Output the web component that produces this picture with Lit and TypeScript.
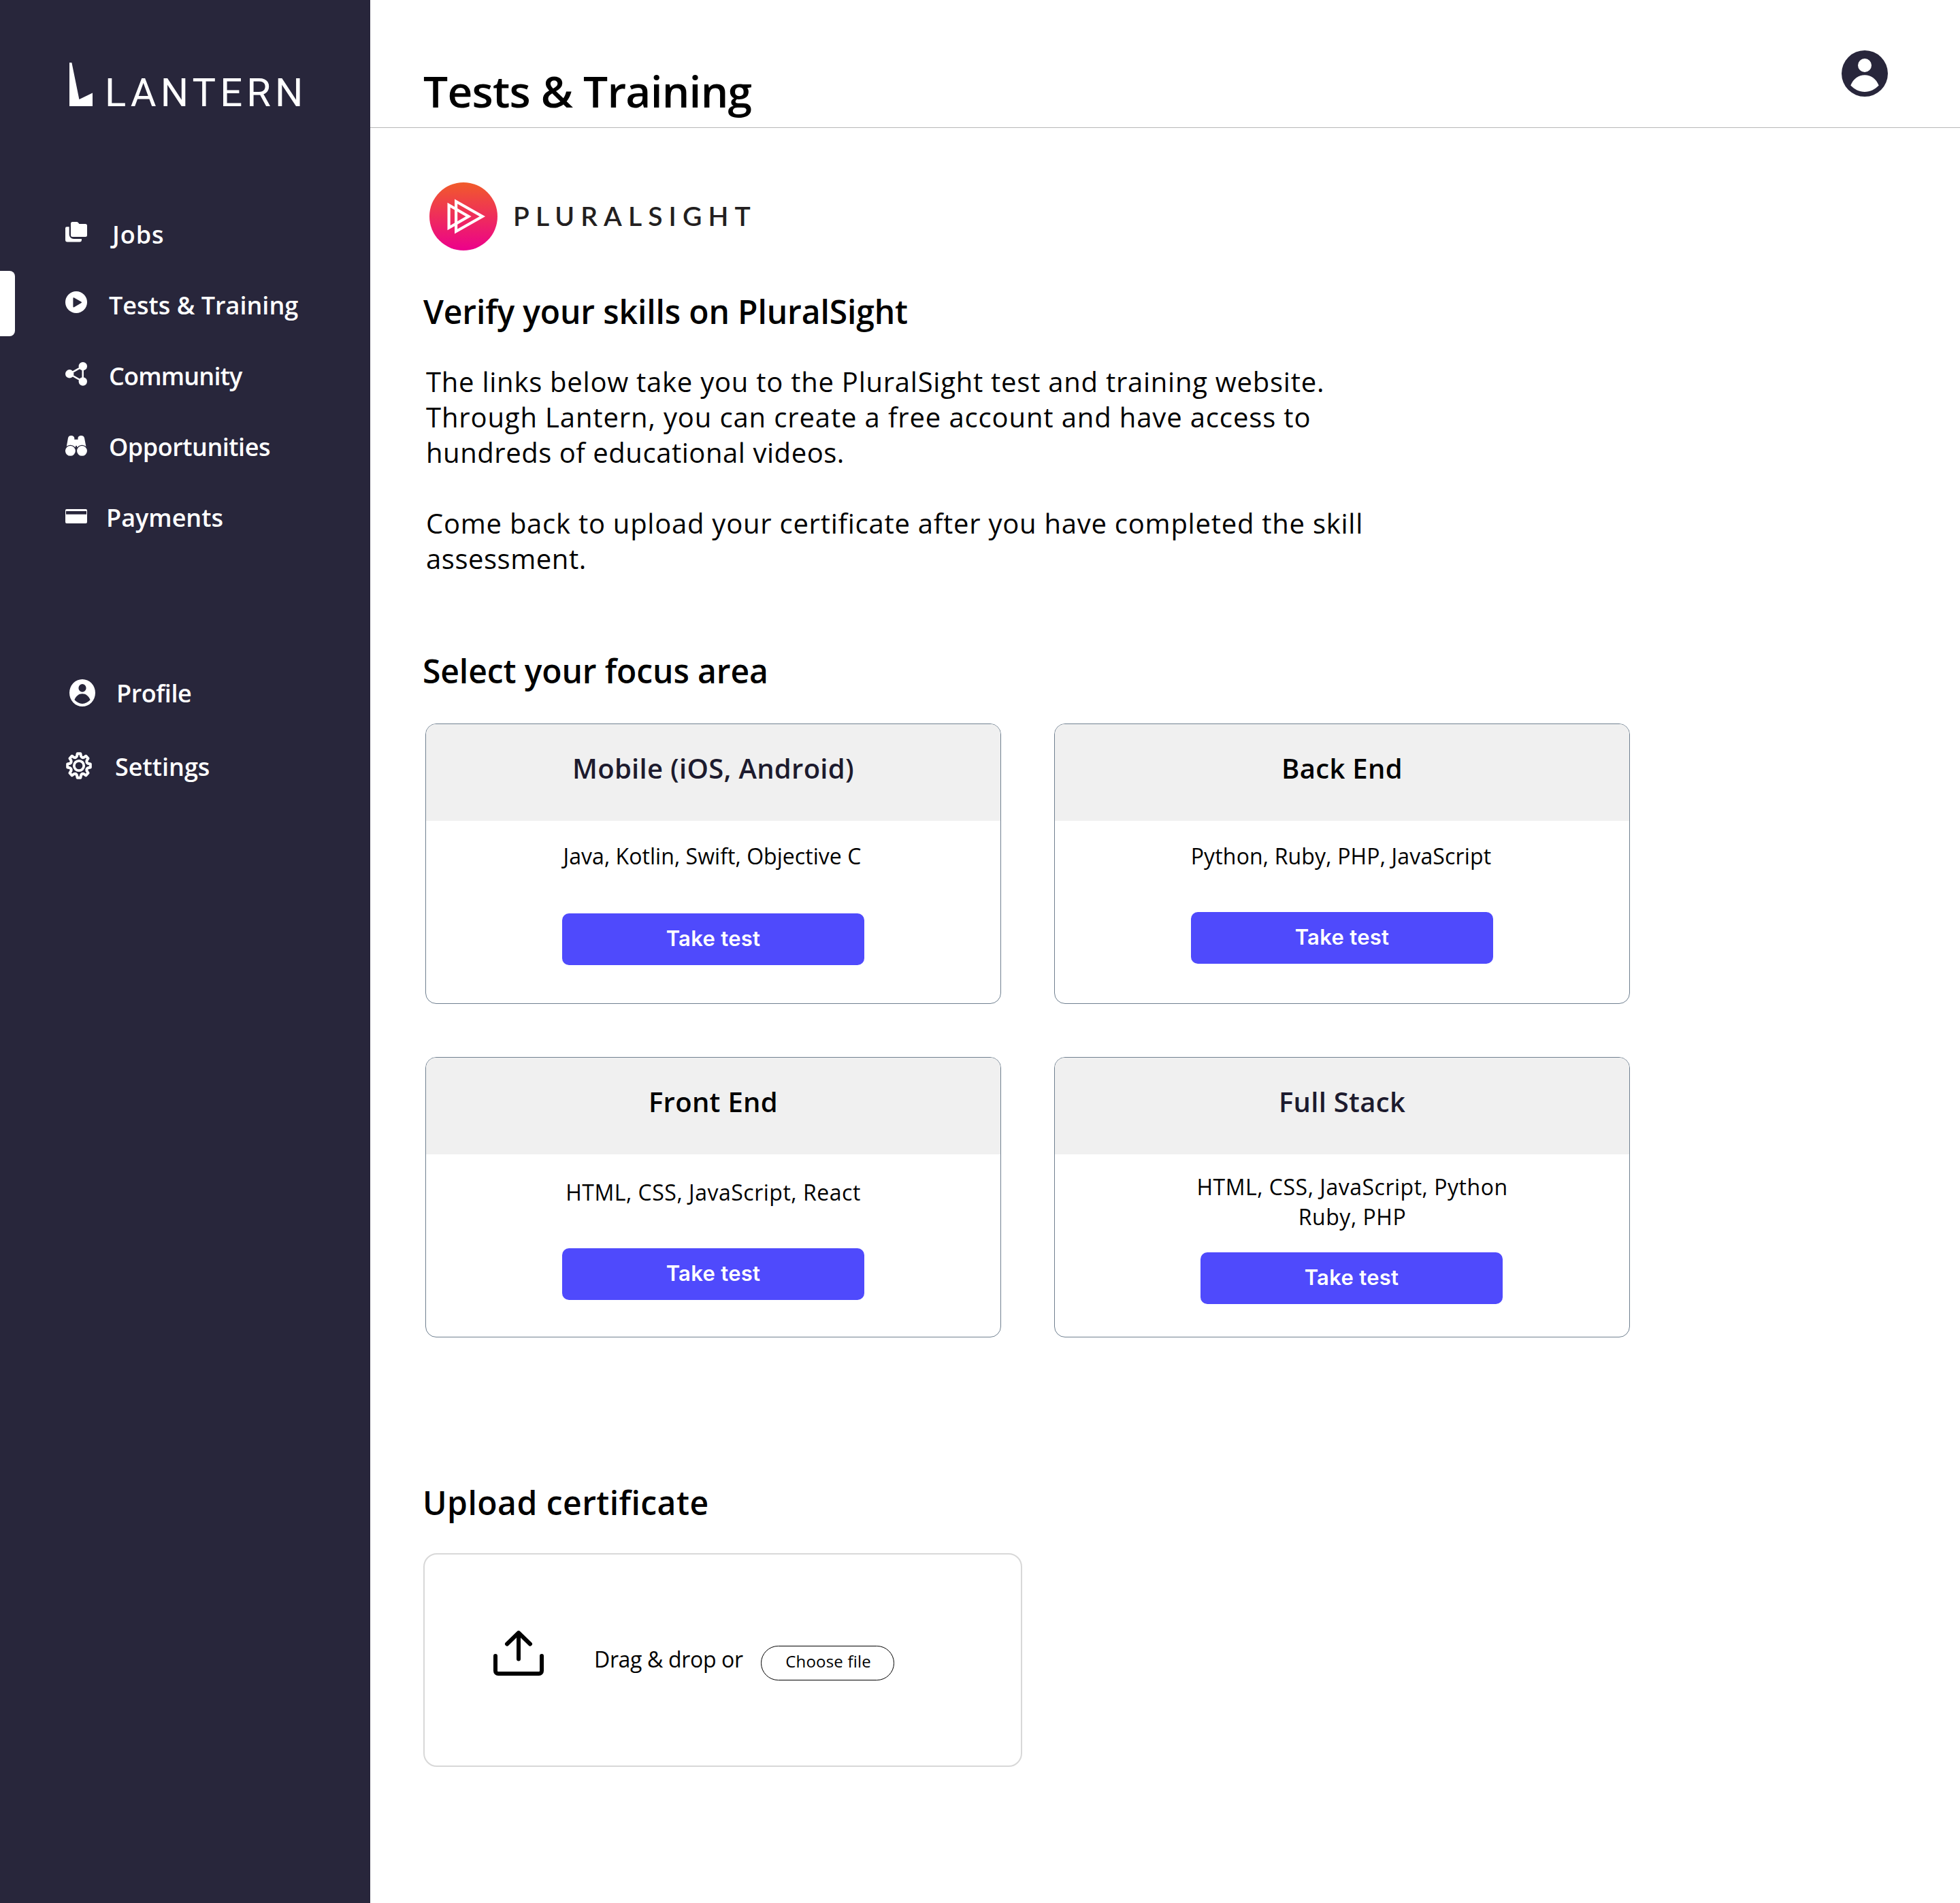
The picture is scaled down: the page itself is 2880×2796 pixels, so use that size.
import { LitElement, html, css, svg } from "lit";
import { customElement, property } from "lit/decorators.js";
import { classMap } from "lit/directives/class-map.js";

/* Eight-toothed cog outline, traced once around its centre. */
const gearPath = (() => {
  const cx = 19, cy = 20, pts: string[] = [];
  const at = (deg: number, r: number) => {
    const a = ((deg - 90) * Math.PI) / 180;
    return `${(cx + r * Math.cos(a)).toFixed(2)} ${(cy + r * 1.05 * Math.sin(a)).toFixed(2)}`;
  };
  for (let i = 0; i < 8; i++) {
    const d = i * 45;
    pts.push(`${i ? "L" : "M"}${at(d - 8, 17)} L${at(d + 8, 17)} L${at(d + 13, 13.6)} Q${at(d + 22.5, 11.6)} ${at(d + 32, 13.6)}`);
  }
  return pts.join(" ") + "Z";
})();

const userShape = svg`<path fill-rule="evenodd" d="M34 0a34 34 0 1 1 0 68a34 34 0 1 1 0-68zM34 12a10 10 0 1 0 0 20a10 10 0 1 0 0-20zM13.3 51.6C19 57.5 26 61 34 61S49 57.5 54.7 51.6C51 42 43 36.3 34 36.3S17 42 13.3 51.6z"/>`;

const icons: Record<string, unknown> = {
  jobs: html`<svg width="32" height="36" viewBox="0 0 32 36"><path fill="#fff" d="M10.5 2h6.3a2.5 2.5 0 0 1 1.8.8L20.5 5H29.5A2.5 2.5 0 0 1 32 7.5V21.5A2.5 2.5 0 0 1 29.5 24H10.5A2.5 2.5 0 0 1 8 21.5V4.5A2.5 2.5 0 0 1 10.5 2zM2 9.3H5.7V20.5a6.500 6.500 0 0 0 6.500 6.500H24V28.500a3 3 0 0 1-3 3H3a3 3 0 0 1-3-3V11.300a2 2 0 0 1 2-2z"/></svg>`,
  tests: html`<svg width="32" height="36" viewBox="0 0 32 36"><circle cx="16" cy="16" r="16" fill="#fff"/><path d="M12.200 10V22.700L23.200 16.300z" fill="#28263b" stroke="#28263b" stroke-width="1.600" stroke-linejoin="round"/></svg>`,
  community: html`<svg width="32" height="36" viewBox="0 0 32 36"><g fill="#fff"><path d="M6 17.300L25.700 6.200V28.500z" fill="none" stroke="#fff" stroke-width="2.500"/><circle cx="6.200" cy="17.300" r="6.200"/><circle cx="25.800" cy="6.200" r="6.200"/><circle cx="25.800" cy="28.500" r="6.200"/></g></svg>`,
  opportunities: html`<svg width="32" height="36" viewBox="0 0 32 36"><path fill="#fff" d="M1.600 21L4 7.500C4.500 5 6.300 4 8.700 4S13 5.500 13.300 7.500V9.700H18.500V7.500C18.800 5.500 20.700 4 23.100 4S27.500 5 28 7.500L30.600 21z"/><path d="M16 19v16" stroke="#28263b" stroke-width="2"/><g fill="#fff" stroke="#28263b" stroke-width="1.300"><circle cx="7.400" cy="26.400" r="8.100"/><circle cx="24.500" cy="26.400" r="8.100"/></g></svg>`,
  payments: html`<svg width="32" height="36" viewBox="0 0 32 36"><rect y="8" width="32" height="21" rx="2" fill="#fff"/><path d="M1 11h30v4.700H1z" fill="#28263b"/></svg>`,
  profile: html`<svg width="38" height="40" viewBox="0 0 68 68" preserveAspectRatio="none" fill="#fff">${userShape}</svg>`,
  settings: html`<svg width="38" height="40" viewBox="0 0 38 40" fill="none" stroke="#fff" stroke-width="4"><path d=${gearPath} stroke-linejoin="round"/><circle cx="19" cy="20" r="7.200" stroke-width="3.800"/></svg>`,
};

@customElement("side-nav")
class SideNav extends LitElement {
  @property() active = "tests";

  static styles = css`
    :host { display: block; width: 544px; flex: none; background: #28263b; color: #fff; box-sizing: border-box; padding-top: 92px; }
    .brand { display: flex; align-items: flex-start; gap: 18px; height: 64px; padding-left: 102px; }
    .brand svg { display: block; }
    .word { font: 400 58px/64px Roboto, sans-serif; letter-spacing: 6.09px; margin-top: 12px; }
    nav { display: flex; flex-direction: column; margin-top: 136px; }
    nav.account { margin-top: 154px; gap: 4px; }
    a { display: flex; align-items: flex-start; height: 104px; padding-left: 96px; font: 600 36px/106px "Open Sans", sans-serif; position: relative; color: #fff; white-space: nowrap; }
    a.active::before { content: ""; position: absolute; left: 0; top: 2px; width: 22px; height: 96px; background: #fff; border-radius: 0 8px 8px 0; }
    svg { display: block; flex: none; }
    a svg { margin-top: 32px; }
    .label { margin-left: 32px; }
    .jobs .label { margin-left: 37px; letter-spacing: 0.94px; }
    .community .label { letter-spacing: -0.8px; }
    .opportunities .label { letter-spacing: -0.48px; }
    .payments .label { margin-left: 28px; }
    .profile { padding-left: 102px; }
    .profile .label { margin-left: 31px; letter-spacing: -0.46px; }
    .settings { padding-left: 97px; }
    .settings svg { margin-top: 31px; }
    .settings .label { margin-left: 34px; }
  `;

  item(id: string, label: string) {
    return html`<a class=${classMap({ [id]: true, active: id === this.active })}>${icons[id]}<span class="label">${label}</span></a>`;
  }

  render() {
    return html`
      <div class="brand">
        <svg width="34" height="64" viewBox="0 0 34 64"><path fill="#fff" d="M0 0h3.400L14.400 54L34 44.500V64H0z"/></svg>
        <span class="word">LANTERN</span>
      </div>
      <nav>
        ${this.item("jobs", "Jobs")}${this.item("tests", "Tests & Training")}${this.item("community", "Community")}${this.item("opportunities", "Opportunities")}${this.item("payments", "Payments")}
      </nav>
      <nav class="account">${this.item("profile", "Profile")}${this.item("settings", "Settings")}</nav>
    `;
  }
}

@customElement("focus-card")
class FocusCard extends LitElement {
  @property() heading = "";
  @property({ attribute: false }) lines: string[] = [];
  @property() kind = "";

  static styles = css`
    :host { display: block; }
    .card { box-sizing: border-box; width: 846px; height: 412px; border: 1px solid #708090; border-radius: 16px; overflow: hidden; text-align: center; }
    .head { box-sizing: border-box; height: 142px; padding-top: 39px; background: #f0f0f0; font: 600 40px/52px "Open Sans", sans-serif; letter-spacing: 0.3px; color: #000; }
    .ink .head { color: #1d1b2e; }
    .body { display: flex; flex-direction: column; align-items: center; padding-top: 30px; gap: 60px; }
    .stack { font: 400 32px/44px "Open Sans", sans-serif; color: #000; }
    .line { display: block; }
    .btn { box-sizing: border-box; width: 444px; height: 76px; border-radius: 10px; background: #4f4afc; color: #fff; font: 600 31px/74px Inter, sans-serif; letter-spacing: 0.3px; }
    .mobile .body { gap: 62px; }
    .mobile .stack { padding-right: 3px; letter-spacing: 0.05px; }
    .back .stack { padding-right: 3px; letter-spacing: 0.15px; }
    .front .body { padding-top: 34px; }
    .front .stack { letter-spacing: 0.52px; }
    .full .body { padding-top: 26px; padding-left: 28px; gap: 30px; }
    .full .stack { padding-left: 2px; letter-spacing: 0.52px; }
  `;

  render() {
    const ink = this.kind === "mobile" || this.kind === "full";
    return html`<div class=${classMap({ card: true, ink, [this.kind]: true })}>
      <div class="head">${this.heading}</div>
      <div class="body">
        <div class="stack">${this.lines.map((l) => html`<span class="line">${l}</span>`)}</div>
        <div class="btn">Take test</div>
      </div>
    </div>`;
  }
}

@customElement("app-root")
class AppRoot extends LitElement {
  static styles = css`
    :host { display: flex; width: 2880px; height: 2796px; overflow: hidden; background: #fff; color: #000; }
    main { flex: 1; min-width: 0; }
    header { box-sizing: border-box; height: 188px; border-bottom: 1px solid #b8b8b8; padding: 74px 106px 0 78px; display: flex; justify-content: space-between; align-items: flex-start; }
    h1, h2, p { margin: 0; white-space: nowrap; }
    h1 { font: 600 64px/88px "Open Sans", sans-serif; letter-spacing: -0.77px; margin-top: 16px; }
    svg { display: block; flex: none; }
    .content { padding: 80px 0 0 78px; }
    .partner { display: flex; align-items: center; gap: 23px; height: 100px; margin-left: 9px; }
    .partner span { font: 600 39px/60px Lato, sans-serif; letter-spacing: 9.1px; color: #231f20; margin-bottom: 3px; }
    h2 { font: 600 48px/60px "Open Sans", sans-serif; }
    .verify { margin-top: 60px; letter-spacing: -0.13px; }
    .intro { margin: 47px 0 0 4px; font: 400 40px/52px "Open Sans", sans-serif; letter-spacing: 0.75px; }
    .intro + .intro { margin-top: 52px; }
    .loose { letter-spacing: 0.87px; }
    .tight { letter-spacing: 0.55px; }
    .select { margin: 109px 0 47px -1px; letter-spacing: -0.1px; }
    .cards { display: grid; grid-template-columns: 846px 846px; gap: 78px; margin-left: 3px; }
    .upload { margin: 213px 0 44px -1px; letter-spacing: 0.47px; }
    .drop { box-sizing: border-box; width: 880px; height: 314px; border: 2px solid #d8d8d8; border-radius: 20px; display: flex; align-items: flex-start; padding: 111px 0 0 101px; }
    .hint { flex: 0 0 245px; margin: 21px 0 0 74px; font: 400 32px/44px "Open Sans", sans-serif; letter-spacing: -0.34px; }
    .choose { box-sizing: border-box; width: 196px; height: 51px; margin-top: 23px; padding-left: 2px; border: 1px solid #000; border-radius: 26px; text-align: center; font: 400 24px/43px "Open Sans", sans-serif; letter-spacing: 0.19px; }
  `;

  render() {
    return html`
      <side-nav active="tests"></side-nav>
      <main>
        <header>
          <h1>Tests &amp; Training</h1>
          <svg width="68" height="68" viewBox="0 0 68 68" fill="#28263b">${userShape}</svg>
        </header>
        <div class="content">
          <div class="partner">
            <svg width="100" height="100" viewBox="0 0 100 100">
              <defs><linearGradient id="g" x1="0" y1="0" x2="0" y2="1"><stop offset="0" stop-color="#f15b2a"/><stop offset="1" stop-color="#ec008c"/></linearGradient></defs>
              <circle cx="50" cy="50" r="50" fill="url(#g)"/>
              <g fill="none" stroke="#fff" stroke-width="4.200"><path d="M28.600 33.300V66.700L57.500 50z"/><path d="M39.100 28V72L77.800 50z"/></g>
            </svg>
            <span>PLURALSIGHT</span>
          </div>
          <h2 class="verify">Verify your skills on PluralSight</h2>
          <p class="intro">The links below take you to the PluralSight test and training website.<br><span class="loose">Through Lantern, you can create a free account and have access to</span><br><span class="tight">hundreds of educational videos.</span></p>
          <p class="intro">Come back to upload your certificate after you have completed the skill<br><span class="tight">assessment.</span></p>
          <h2 class="select">Select your focus area</h2>
          <div class="cards">
            <focus-card kind="mobile" heading="Mobile (iOS, Android)" .lines=${["Java, Kotlin, Swift, Objective C"]}></focus-card>
            <focus-card kind="back" heading="Back End" .lines=${["Python, Ruby, PHP, JavaScript"]}></focus-card>
            <focus-card kind="front" heading="Front End" .lines=${["HTML, CSS, JavaScript, React"]}></focus-card>
            <focus-card kind="full" heading="Full Stack" .lines=${["HTML, CSS, JavaScript, Python", "Ruby, PHP"]}></focus-card>
          </div>
          <h2 class="upload">Upload certificate</h2>
          <div class="drop">
            <svg width="74" height="67" viewBox="0 0 74 67" fill="none" stroke="#000" stroke-width="6" stroke-linecap="round" stroke-linejoin="round"><path d="M3 38V60a4 4 0 0 0 4 4H67a4 4 0 0 0 4-4V38"/><path d="M37 5V42.500M20 20.500L37 4L54 20.500"/></svg>
            <span class="hint">Drag &amp; drop or</span>
            <span class="choose">Choose file</span>
          </div>
        </div>
      </main>
    `;
  }
}
